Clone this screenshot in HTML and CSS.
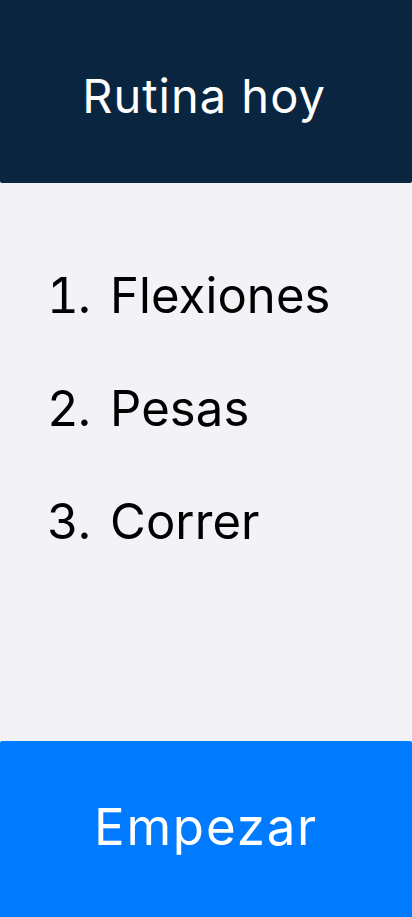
FILE: index.html
```html
<!DOCTYPE html>
<html lang="es">
<head>
<meta charset="utf-8">
<meta name="viewport" content="width=device-width, initial-scale=1">
<title>Rutina hoy</title>
<link rel="stylesheet" href="styles.css">
</head>
<body>
<div class="app">
  <header class="header">
    <h1 class="title">Rutina hoy</h1>
  </header>
  <main class="content">
    <ol class="routine">
      <li class="routine-item"><span class="num">1.</span> <span class="name">Flexiones</span></li>
      <li class="routine-item"><span class="num">2.</span> <span class="name">Pesas</span></li>
      <li class="routine-item"><span class="num">3.</span> <span class="name">Correr</span></li>
    </ol>
  </main>
  <button class="start-btn" type="button">Empezar</button>
</div>
</body>
</html>
```
FILE: styles.css
```css
* { box-sizing: border-box; }
html, body { margin: 0; padding: 0; height: 100%; }
body {
  font-family: Inter, "Noto Sans", "Liberation Sans", sans-serif;
  background: #f2f2f7;
}
.app {
  display: flex;
  flex-direction: column;
  height: 917px;
  width: 412px;
}
.header {
  height: 183px;
  flex: none;
  background: #0a2540;
  display: flex;
  align-items: center;
  justify-content: center;
  padding: 8px 4px 0 0;
  border-radius: 0 0 2px 2px;
}
.title {
  margin: 0;
  font-size: 47px;
  font-weight: 400;
  line-height: normal;
  letter-spacing: 1px;
  color: #ffffff;
}
.content {
  flex: 1;
  background: #f2f2f7;
}
.routine {
  list-style: none;
  margin: 0;
  padding: 56px 0 0 47px;
}
.routine-item {
  display: flex;
  font-size: 49px;
  line-height: 113px;
  color: #000000;
  white-space: nowrap;
}
.num {
  flex: none;
  width: 63px;
  letter-spacing: -1px;
  font-variant-numeric: tabular-nums;
}
.name {
  letter-spacing: 0.1px;
}
.start-btn {
  flex: none;
  height: 176px;
  width: 100%;
  border: none;
  background: #007aff;
  color: #ffffff;
  font-family: inherit;
  font-size: 51px;
  font-weight: 400;
  letter-spacing: 1.8px;
  padding: 0 0 6px;
  border-radius: 2px 2px 0 0;
}
```
